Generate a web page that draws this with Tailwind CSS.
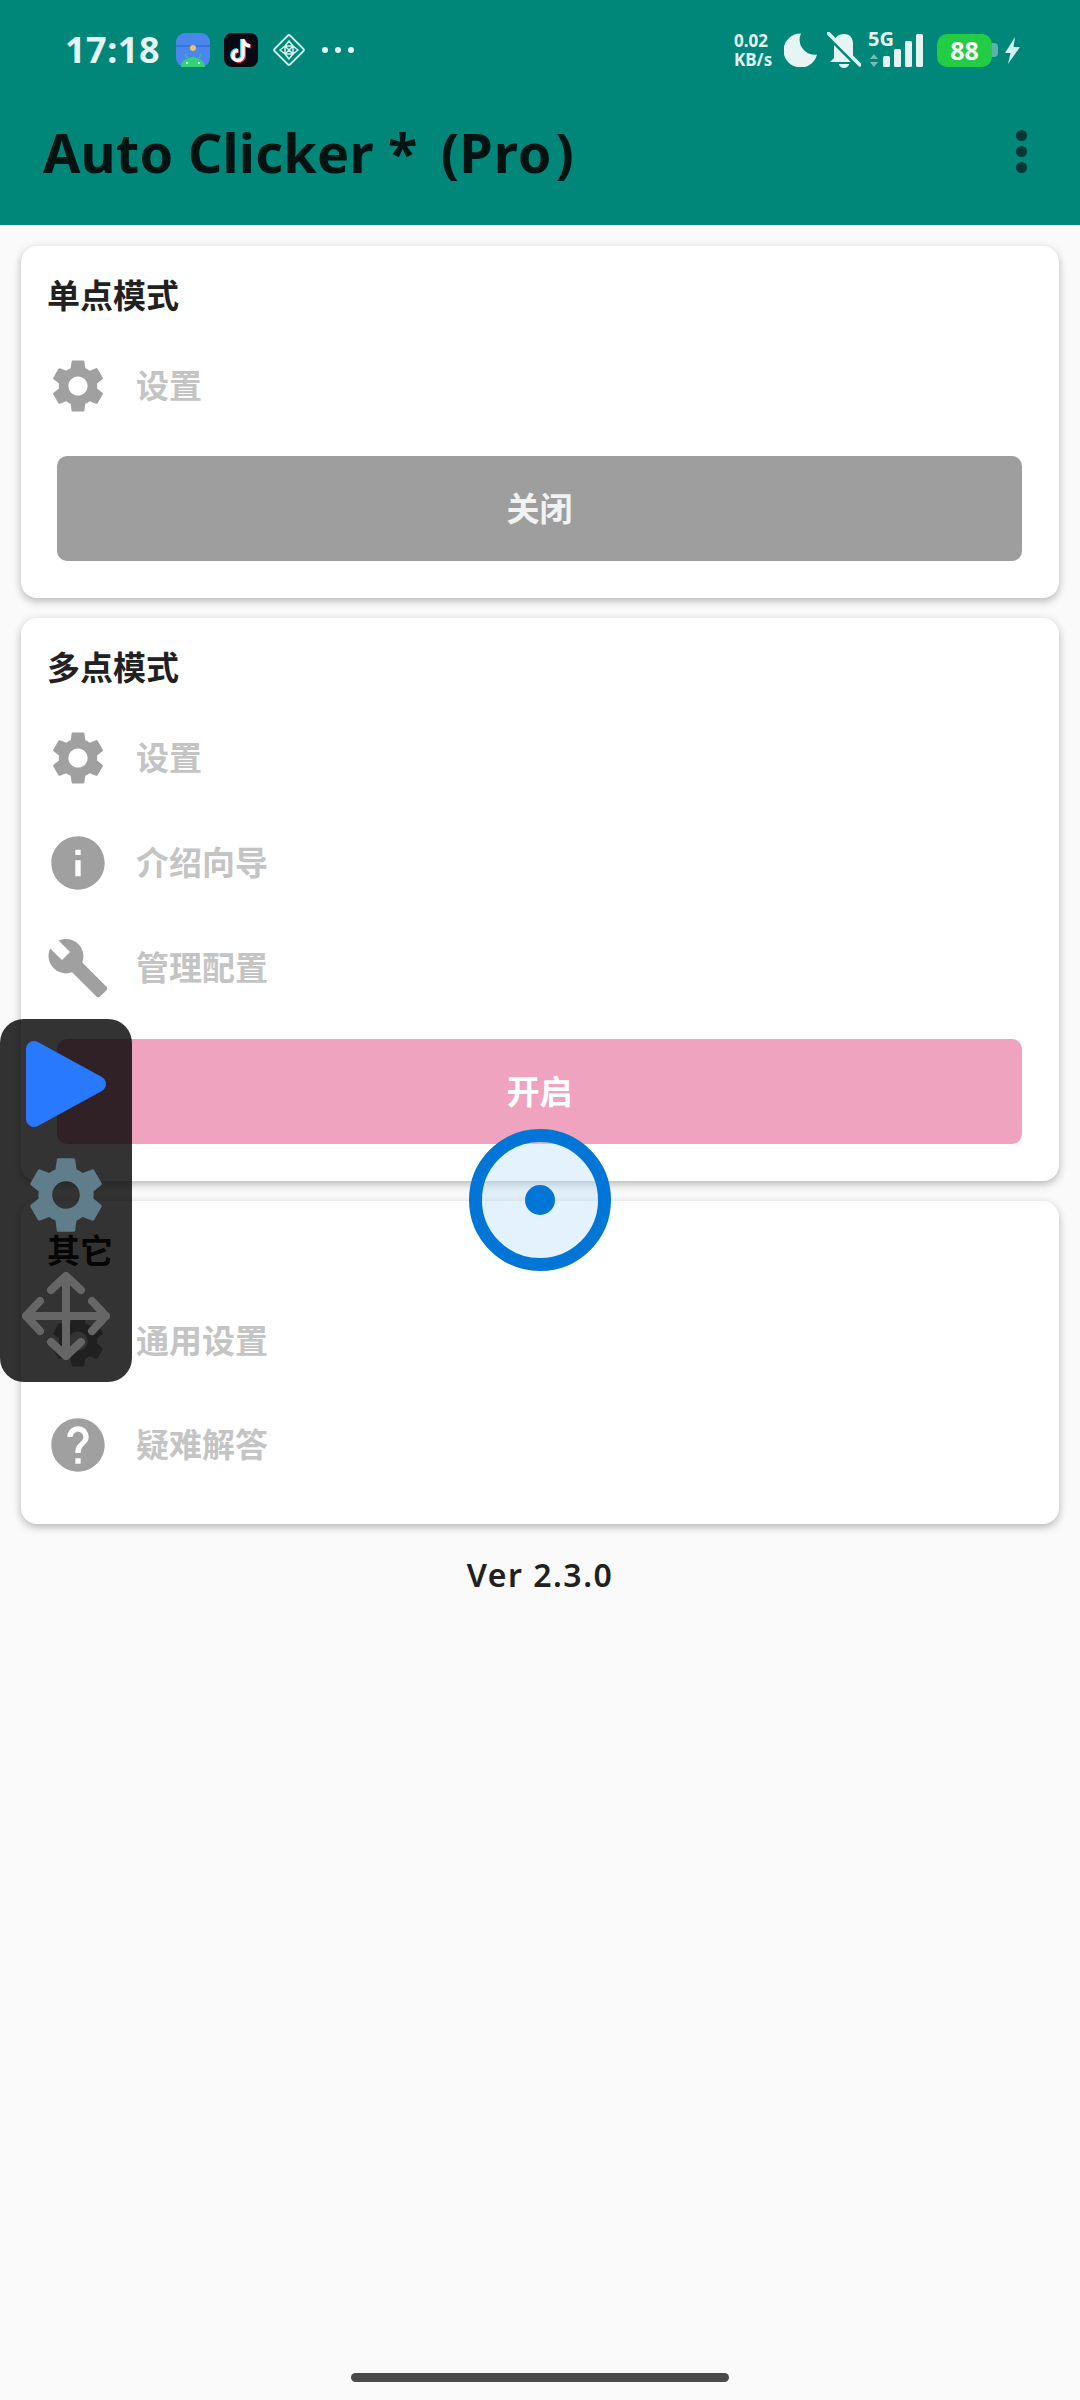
<!DOCTYPE html>
<html lang="zh-CN">
<head>
  <meta charset="UTF-8">
  <meta name="viewport" content="width=device-width, initial-scale=1.0">
  <title>Auto Clicker</title>
  <script src="https://cdn.jsdelivr.net/npm/@tailwindcss/browser@4"></script>
</head>
<body class="relative w-[1080px] h-[2400px] overflow-hidden bg-[#fafafa] font-['Noto_Sans','Noto_Sans_CJK_SC',sans-serif]">

  <!-- header -->
  <header class="relative h-[225px] bg-[#00877a]">
    <div class="flex items-center h-[100px] pl-[65px] pr-[60px] text-[#e6f5f3]">
      <span class="text-[36px] font-bold w-[111px] leading-none tracking-[0.5px]">17:18</span>
      <svg class="ml-0 w-[34px] h-[34px]" viewBox="0 0 34 34">
        <rect width="34" height="34" rx="9" fill="#4a86ec"/>
        <path d="M0 12h34v2H0z" fill="#3b74d6"/>
        <circle cx="17" cy="15" r="3" fill="#e9c46a"/>
        <path d="M5 34a12 10 0 0 1 24 0z" fill="#33d17a"/>
        <path d="M9 21l2 4M25 21l-2 4" stroke="#33d17a" stroke-width="1"/>
        <circle cx="11" cy="30" r="1" fill="#fff"/><circle cx="23" cy="30" r="1" fill="#fff"/>
      </svg>
      <svg class="ml-[14px] w-[34px] h-[34px]" viewBox="0 0 34 34" fill="none">
        <rect width="34" height="34" rx="8" fill="#0b0713"/>
        <path d="M18 6v16a5 5 0 1 1-5-5" stroke="#25d9e4" stroke-width="4"/>
        <path d="M18 6c.5 4 3 6 7 6.500" stroke="#25d9e4" stroke-width="4"/>
        <path d="M20 7v16a5 5 0 1 1-5-5" stroke="#f0304f" stroke-width="4"/>
        <path d="M20 7c.5 4 3 6 7 6.500" stroke="#f0304f" stroke-width="4"/>
        <path d="M19 6.500v16a5 5 0 1 1-5-5" stroke="#fff" stroke-width="3.500"/>
        <path d="M19 6.500c.5 4 3 6 7 6.500" stroke="#fff" stroke-width="3.500"/>
      </svg>
      <svg class="ml-[15px] w-[32px] h-[32px]" viewBox="0 0 32 32" fill="none" stroke="#d5efec" stroke-width="2">
        <rect x="5" y="5" width="22" height="22" rx="2" transform="rotate(45 16 16)"/>
        <path d="M16 7l4 5h-8zM16 25l4-5h-8zM7 16l5-4v8zM25 16l-5-4v8zM12 12l4 4 4-4M12 20l4-4 4 4" stroke-width="1.500"/>
      </svg>
      <div class="ml-[17px] flex gap-[7px]">
        <span class="w-[6px] h-[6px] rounded-full bg-[#e6f5f3]"></span>
        <span class="w-[6px] h-[6px] rounded-full bg-[#e6f5f3]"></span>
        <span class="w-[6px] h-[6px] rounded-full bg-[#e6f5f3]"></span>
      </div>

      <div class="ml-auto flex items-center">
        <div class="flex flex-col text-[17px] font-bold leading-[19px] w-[50px]">
          <span>0.02</span>
          <span>KB/s</span>
        </div>
        <svg class="w-[33px] h-[34px]" viewBox="0 0 33 34"><path d="M17 0.500A17 17 0 1 0 33 21.500A15 15 0 0 1 17 0.500z" fill="#e6f5f3"/></svg>
        <svg class="ml-[10px] w-[34px] h-[36px]" viewBox="0 0 34 36" fill="#e6f5f3">
          <path d="M17 2c6 0 9 4 9 10v14l4 4H3l4-4V12c0-6 4-10 10-10z"/>
          <path d="M12 32h10a5 4 0 0 1-10 0z"/>
          <path d="M-2 2L31 35" stroke="#00877a" stroke-width="3"/>
          <path d="M1 1L33 33" stroke="#e6f5f3" stroke-width="3.500" stroke-linecap="round"/>
        </svg>
        <div class="relative ml-[7px] w-[55px] h-[36px]">
          <span class="absolute left-0 top-[-3px] text-[20px] font-bold leading-[20px]">5G</span>
          <svg class="absolute left-0 top-0 w-[55px] h-[36px]" viewBox="0 0 55 36" fill="#e6f5f3">
            <path d="M6 22l4 5H2zM6 35l4-5H2z" opacity="0.5"/>
            <rect x="15" y="24" width="7" height="11" rx="1.500"/>
            <rect x="26" y="17" width="7" height="18" rx="1.500"/>
            <rect x="37" y="9" width="7" height="26" rx="1.500"/>
            <rect x="48" y="2" width="7" height="33" rx="1.500"/>
          </svg>
        </div>
        <div class="ml-[14px] w-[55px] h-[33px] rounded-[10px] bg-[#22cc44] flex items-center justify-center text-white text-[25px] font-bold leading-none">88</div>
        <div class="w-[6px] h-[14px] rounded-r-[4px] bg-[#e6f5f3]/40"></div>
        <svg class="ml-[7px] w-[15px] h-[27px]" viewBox="0 0 15 27"><path d="M10 0L0 16h5.500L3 27l12-17H8.500z" fill="#d5efec"/></svg>
      </div>
    </div>

    <div class="flex items-center justify-between h-[125px] pl-[43px] pr-[53px] pb-[22px]">
      <h1 class="text-[54px] font-bold leading-none text-[#021311] whitespace-nowrap tracking-[0.2px]">Auto Clicker * <span class="ml-[9px]">(</span><span class="tracking-[1px]">Pro</span><span class="ml-[3px]">)</span></h1>
      <div class="flex flex-col gap-[5px]">
        <span class="w-[11px] h-[11px] rounded-full bg-[#023a33]"></span>
        <span class="w-[11px] h-[11px] rounded-full bg-[#023a33]"></span>
        <span class="w-[11px] h-[11px] rounded-full bg-[#023a33]"></span>
      </div>
    </div>
  </header>

  <main class="px-[21px] pt-[21px]">

    <!-- 单点模式 -->
    <section class="bg-white rounded-[16px] shadow-[0_3px_8px_rgba(0,0,0,0.28)] pb-[37px]">
      <h2 class="h-[73px] pt-[27px] pl-[26px] text-[33px] leading-[46px] font-bold text-[#212121]">单点模式</h2>
      <div class="mt-[15px]">
        <div class="flex items-center h-[104px] pl-[25px] text-[33px] font-bold text-[#c4c4c4]">
          <svg class="w-[64px] h-[64px] fill-[#a0a0a0]" viewBox="0 0 24 24"><path fill-rule="evenodd" d="M19.14 12.94c.04-.3.06-.61.06-.94 0-.32-.02-.64-.07-.94l2.03-1.58a.49.49 0 0 0 .12-.61l-1.92-3.32a.488.488 0 0 0-.59-.22l-2.39.96c-.5-.38-1.03-.7-1.62-.94l-.36-2.54a.484.484 0 0 0-.48-.41h-3.84c-.24 0-.43.17-.47.41l-.36 2.54c-.59.24-1.13.57-1.62.94l-2.39-.96c-.22-.08-.47 0-.59.22L2.74 8.87c-.12.21-.08.47.12.61l2.03 1.58c-.05.3-.09.63-.09.94s.02.64.07.94l-2.03 1.58a.49.49 0 0 0-.12.61l1.92 3.32c.12.22.37.29.59.22l2.39-.96c.5.38 1.03.7 1.62.94l.36 2.54c.05.24.24.41.48.41h3.84c.24 0 .44-.17.47-.41l.36-2.54c.59-.24 1.13-.56 1.62-.94l2.39.96c.22.08.47 0 .59-.22l1.92-3.32c.12-.22.07-.47-.12-.61l-2.01-1.58zM12 15.600c-1.980 0-3.600-1.620-3.600-3.600s1.620-3.600 3.600-3.600 3.600 1.620 3.600 3.600-1.620 3.600-3.600 3.600z"/></svg>
          <span class="ml-[26px]">设置</span>
        </div>
      </div>
      <button class="mt-[18px] ml-[36px] w-[965px] h-[105px] rounded-[10px] bg-[#9e9e9e] text-[33px] font-bold text-[#f2f2f2]">关闭</button>
    </section>

    <!-- 多点模式 -->
    <section class="mt-[20px] bg-white rounded-[16px] shadow-[0_3px_8px_rgba(0,0,0,0.28)] pb-[37px]">
      <h2 class="h-[73px] pt-[27px] pl-[26px] text-[33px] leading-[46px] font-bold text-[#212121]">多点模式</h2>
      <div class="mt-[14.5px]">
        <div class="flex items-center h-[105px] pl-[25px] text-[33px] font-bold text-[#c4c4c4]">
          <svg class="w-[64px] h-[64px] fill-[#a0a0a0]" viewBox="0 0 24 24"><path fill-rule="evenodd" d="M19.14 12.94c.04-.3.06-.61.06-.94 0-.32-.02-.64-.07-.94l2.03-1.58a.49.49 0 0 0 .12-.61l-1.92-3.32a.488.488 0 0 0-.59-.22l-2.39.96c-.5-.38-1.03-.7-1.62-.94l-.36-2.54a.484.484 0 0 0-.48-.41h-3.84c-.24 0-.43.17-.47.41l-.36 2.54c-.59.24-1.13.57-1.62.94l-2.39-.96c-.22-.08-.47 0-.59.22L2.74 8.87c-.12.21-.08.47.12.61l2.03 1.58c-.05.3-.09.63-.09.94s.02.64.07.94l-2.03 1.58a.49.49 0 0 0-.12.61l1.92 3.32c.12.22.37.29.59.22l2.39-.96c.5.38 1.03.7 1.62.94l.36 2.54c.05.24.24.41.48.41h3.84c.24 0 .44-.17.47-.41l.36-2.54c.59-.24 1.13-.56 1.62-.94l2.39.96c.22.08.47 0 .59-.22l1.92-3.32c.12-.22.07-.47-.12-.61l-2.01-1.58zM12 15.600c-1.980 0-3.600-1.620-3.600-3.600s1.620-3.600 3.600-3.600 3.600 1.620 3.600 3.600-1.620 3.600-3.600 3.600z"/></svg>
          <span class="ml-[26px]">设置</span>
        </div>
        <div class="flex items-center h-[105px] pl-[25px] text-[33px] font-bold text-[#c4c4c4]">
          <svg class="w-[64px] h-[64px] fill-[#a0a0a0]" viewBox="0 0 24 24"><path fill-rule="evenodd" d="M12 2C6.480 2 2 6.480 2 12s4.480 10 10 10 10-4.480 10-10S17.520 2 12 2zm1 15h-2v-6h2v6zm0-8h-2V7h2v2z"/></svg>
          <span class="ml-[26px]">介绍向导</span>
        </div>
        <div class="flex items-center h-[105px] pl-[25px] text-[33px] font-bold text-[#c4c4c4]">
          <svg class="w-[64px] h-[64px] fill-[#a0a0a0]" viewBox="0 0 24 24"><path d="M22.700 19l-9.100-9.100c.9-2.300.4-5-1.500-6.900-2-2-5-2.400-7.400-1.300L9 6 6 9 1.600 4.700C.4 7.100.9 10.100 2.900 12.100c1.900 1.900 4.600 2.400 6.900 1.500l9.100 9.100c.4.4 1 .4 1.400 0l2.300-2.300c.5-.4.5-1.100.1-1.400z"/></svg>
          <span class="ml-[26px]">管理配置</span>
        </div>
      </div>
      <button class="mt-[18.5px] ml-[36px] w-[965px] h-[105px] rounded-[10px] bg-[#efa3bf] text-[33px] font-bold text-white">开启</button>
    </section>

    <!-- 其它 -->
    <section class="mt-[20px] bg-white rounded-[16px] shadow-[0_3px_8px_rgba(0,0,0,0.28)] pb-[27px]">
      <h2 class="h-[73px] pt-[27px] pl-[26px] text-[33px] leading-[46px] font-bold text-[#212121]">其它</h2>
      <div class="mt-[15px]">
        <div class="flex items-center h-[104px] pl-[25px] text-[33px] font-bold text-[#c4c4c4]">
          <svg class="w-[64px] h-[64px] fill-[#a0a0a0]" viewBox="0 0 24 24"><path fill-rule="evenodd" d="M19.14 12.94c.04-.3.06-.61.06-.94 0-.32-.02-.64-.07-.94l2.03-1.58a.49.49 0 0 0 .12-.61l-1.92-3.32a.488.488 0 0 0-.59-.22l-2.39.96c-.5-.38-1.03-.7-1.62-.94l-.36-2.54a.484.484 0 0 0-.48-.41h-3.84c-.24 0-.43.17-.47.41l-.36 2.54c-.59.24-1.13.57-1.62.94l-2.39-.96c-.22-.08-.47 0-.59.22L2.74 8.87c-.12.21-.08.47.12.61l2.03 1.58c-.05.3-.09.63-.09.94s.02.64.07.94l-2.03 1.58a.49.49 0 0 0-.12.61l1.92 3.32c.12.22.37.29.59.22l2.39-.96c.5.38 1.03.7 1.62.94l.36 2.54c.05.24.24.41.48.41h3.84c.24 0 .44-.17.47-.41l.36-2.54c.59-.24 1.13-.56 1.62-.94l2.39.96c.22.08.47 0 .59-.22l1.92-3.32c.12-.22.07-.47-.12-.61l-2.01-1.58zM12 15.600c-1.980 0-3.600-1.620-3.600-3.600s1.620-3.600 3.600-3.600 3.600 1.620 3.600 3.600-1.620 3.600-3.600 3.600z"/></svg>
          <span class="ml-[26px]">通用设置</span>
        </div>
        <div class="flex items-center h-[104px] pl-[25px] text-[33px] font-bold text-[#c4c4c4]">
          <svg class="w-[64px] h-[64px] fill-[#a0a0a0]" viewBox="0 0 24 24"><path d="M12 2C6.480 2 2 6.480 2 12s4.480 10 10 10 10-4.480 10-10S17.520 2 12 2zm1 17h-2v-2h2v2zm2.070-7.750l-.9.92C13.450 12.900 13 13.500 13 15h-2v-.5c0-1.100.45-2.100 1.170-2.830l1.240-1.260c.37-.36.59-.86.59-1.410 0-1.100-.9-2-2-2s-2 .9-2 2H8c0-2.210 1.790-4 4-4s4 1.790 4 4c0 .88-.36 1.680-.93 2.250z"/></svg>
          <span class="ml-[26px]">疑难解答</span>
        </div>
      </div>
    </section>

    <p class="mt-[31px] text-center text-[32px] leading-[40px] font-semibold text-[#212121] tracking-[1.5px]">Ver 2.3.0</p>
  </main>

  <!-- home bar -->
  <div class="absolute bottom-[18px] left-[351px] w-[378px] h-[9px] rounded-full bg-[#4a4a4a]"></div>

  <!-- floating control panel -->
  <div class="absolute left-0 top-[1019px] w-[132px] h-[363px] rounded-[24px] bg-black/80">
    <svg class="absolute left-[22px] top-[18px] w-[88px] h-[94px]" viewBox="0 0 88 94">
      <path d="M12 12L76 47L12 82z" fill="#2979ff" stroke="#2979ff" stroke-width="16" stroke-linejoin="round"/>
    </svg>
    <svg class="absolute left-[20px] top-[130px] w-[92px] h-[92px] fill-[#607d8b]" viewBox="0 0 24 24"><path fill-rule="evenodd" d="M19.14 12.94c.04-.3.06-.61.06-.94 0-.32-.02-.64-.07-.94l2.03-1.58a.49.49 0 0 0 .12-.61l-1.92-3.32a.488.488 0 0 0-.59-.22l-2.39.96c-.5-.38-1.03-.7-1.62-.94l-.36-2.54a.484.484 0 0 0-.48-.41h-3.84c-.24 0-.43.17-.47.41l-.36 2.54c-.59.24-1.13.57-1.62.94l-2.39-.96c-.22-.08-.47 0-.59.22L2.74 8.87c-.12.21-.08.47.12.61l2.03 1.58c-.05.3-.09.63-.09.94s.02.64.07.94l-2.03 1.58a.49.49 0 0 0-.12.61l1.92 3.32c.12.22.37.29.59.22l2.39-.96c.5.38 1.03.7 1.62.94l.36 2.54c.05.24.24.41.48.41h3.84c.24 0 .44-.17.47-.41l.36-2.54c.59-.24 1.13-.56 1.62-.94l2.39.96c.22.08.47 0 .59-.22l1.92-3.32c.12-.22.07-.47-.12-.61l-2.01-1.58zM12 15.600c-1.980 0-3.600-1.620-3.600-3.600s1.620-3.600 3.600-3.600 3.600 1.620 3.600 3.600-1.620 3.600-3.600 3.600z"/></svg>
    <svg class="absolute left-[22px] top-[253px] w-[88px] h-[88px]" viewBox="0 0 88 88" fill="none" stroke="#666" stroke-width="8" stroke-linecap="round" stroke-linejoin="round">
      <path d="M44 4V84M4 44H84M29 18L44 4L59 18M29 70L44 84L59 70M18 29L4 44L18 59M70 29L84 44L70 59"/>
    </svg>
  </div>

  <!-- touch point -->
  <div class="absolute left-[469px] top-[1129px] w-[142px] h-[142px] rounded-full border-[13px] border-[#0276d6] bg-[#bbdefb]/40 flex items-center justify-center">
    <span class="w-[30px] h-[30px] rounded-full bg-[#0276d6]"></span>
  </div>

</body>
</html>
